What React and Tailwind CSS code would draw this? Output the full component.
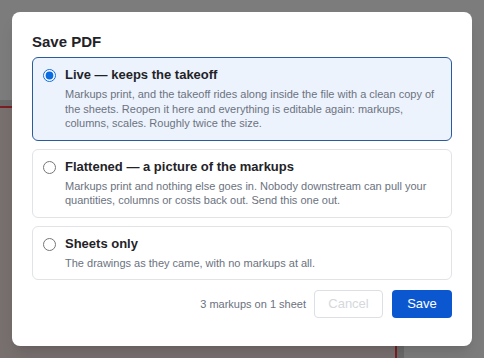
import React, { useState } from 'react';

const options = [
  {
    id: 'live',
    title: 'Live — keeps the takeoff',
    desc: 'Markups print, and the takeoff rides along inside the file with a clean copy of the sheets. Reopen it here and everything is editable again: markups, columns, scales. Roughly twice the size.',
  },
  {
    id: 'flat',
    title: 'Flattened — a picture of the markups',
    desc: 'Markups print and nothing else goes in. Nobody downstream can pull your quantities, columns or costs back out. Send this one out.',
  },
  {
    id: 'sheets',
    title: 'Sheets only',
    desc: 'The drawings as they came, with no markups at all.',
  },
];

export default function App() {
  const [mode, setMode] = useState('live');

  return (
    <div
      className="relative w-[484px] h-[358px] overflow-hidden bg-[#7c7c7c]"
      style={{ fontFamily: '"Liberation Sans", Arial, sans-serif' }}
    >
      {/* page behind the overlay */}
      <div className="absolute left-0 top-[100px] w-[404px] h-[270px] bg-[#6a6a6a]">
        <div className="mt-[6px] w-[397px] h-full border-t-2 border-r-2 border-[#7a1f22] bg-[#786f6f]" />
      </div>

      {/* dialog */}
      <div className="absolute left-[12px] top-[12px] w-[460px] h-[334px] rounded-[8px] bg-white px-[20px] pt-[20px] shadow-lg">
        <h2 className="text-[15px] leading-[20px] font-bold text-[#1f2328]">Save PDF</h2>

        <div className="mt-[5px] flex flex-col gap-[8px]">
          {options.map((o) => {
            const active = mode === o.id;
            return (
              <label
                key={o.id}
                className={
                  'flex items-start gap-[9px] rounded-[6px] border px-[10px] pt-[9px] pb-[9px] cursor-pointer ' +
                  (active ? 'border-[#2a5b9c] bg-[#edf3fd]' : 'border-[#e1e3e7] bg-white')
                }
              >
                <input
                  type="radio"
                  name="mode"
                  checked={active}
                  onChange={() => setMode(o.id)}
                  className="m-0 mt-[2px] w-[13px] h-[13px] shrink-0 accent-[#0b6be0]"
                />
                <div className="min-w-0">
                  <div className="text-[13px] leading-[16px] font-bold text-[#1f2328]">{o.title}</div>
                  <p className="mt-[4px] text-[11px] leading-[14.5px] text-[#6b7280]">{o.desc}</p>
                </div>
              </label>
            );
          })}
        </div>

        <div className="mt-[10px] flex items-center justify-end">
          <span className="text-[11px] text-[#6b7280] mr-[8px]">3 markups on 1 sheet</span>
          <button
            type="button"
            disabled
            className="h-[28px] w-[69px] rounded-[4px] border border-[#dcdfe3] bg-white text-[13px] text-[#d5d8dd]"
          >
            Cancel
          </button>
          <button
            type="button"
            className="ml-[9px] h-[28px] w-[60px] rounded-[4px] bg-[#0b57d0] text-[13px] text-white"
          >
            Save
          </button>
        </div>
      </div>
    </div>
  );
}
